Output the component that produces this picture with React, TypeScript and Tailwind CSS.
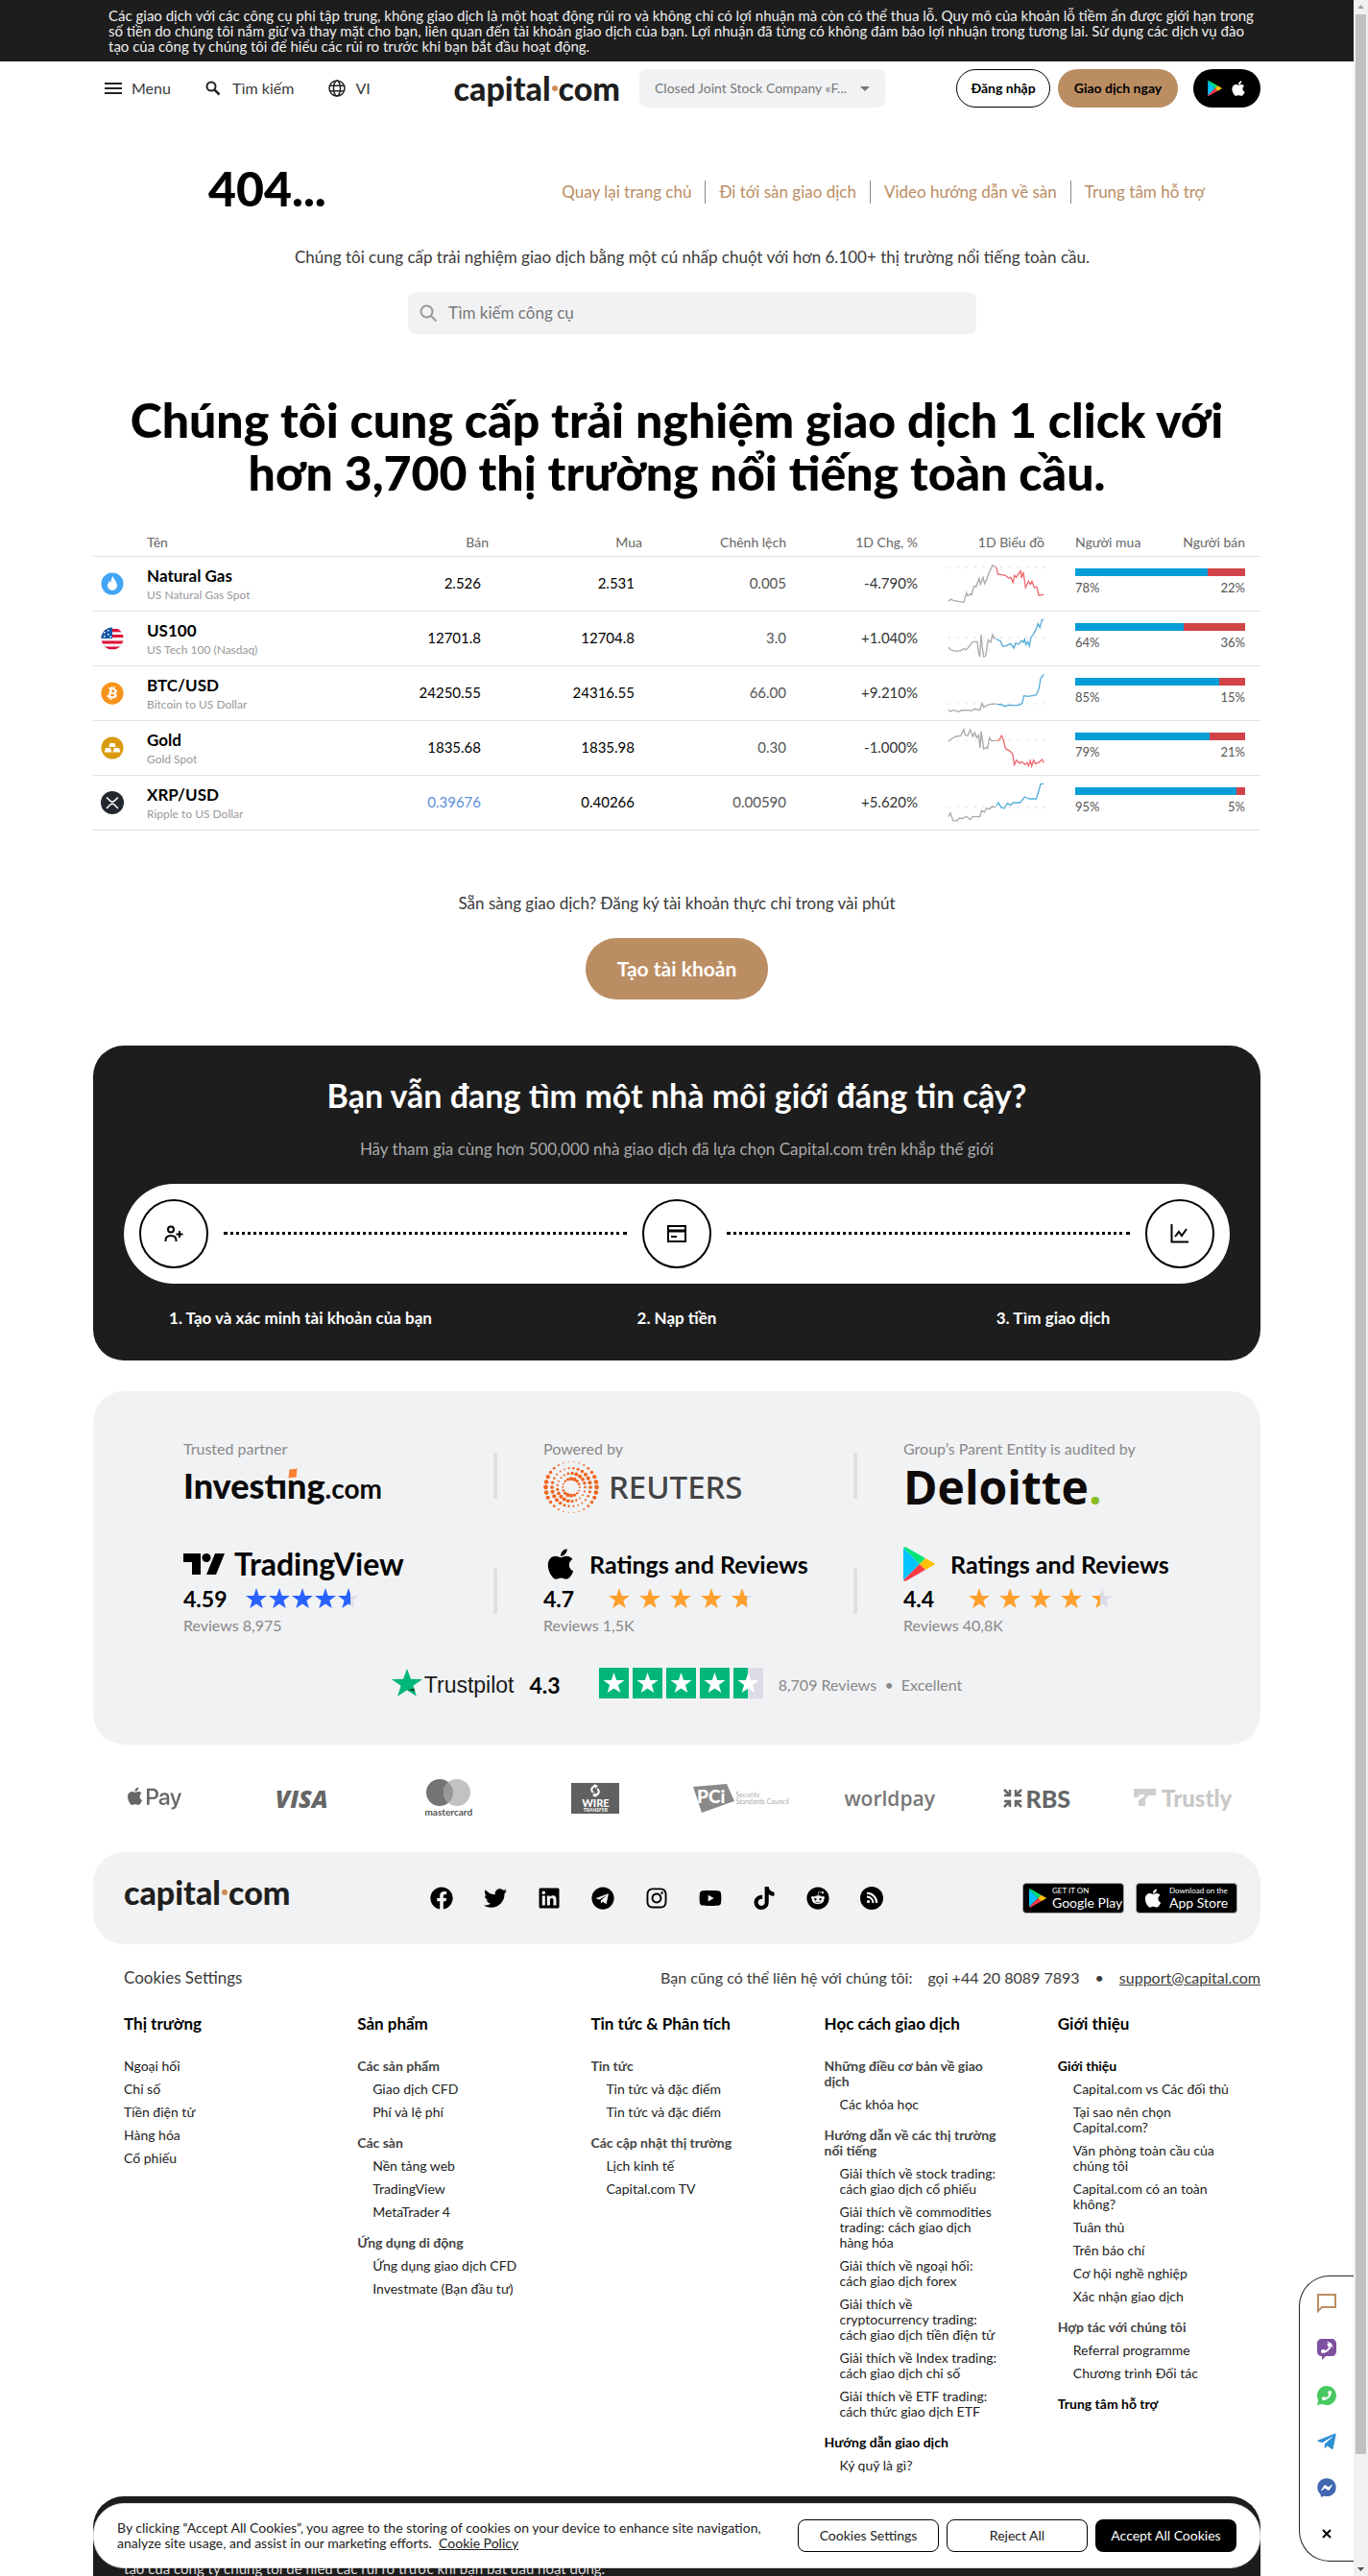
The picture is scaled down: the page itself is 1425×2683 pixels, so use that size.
import React from "react";
import {
  FaApple,
  FaApplePay,
  FaBitcoin,
  FaFacebook,
  FaFacebookMessenger,
  FaInstagram,
  FaLinkedin,
  FaPhoneAlt,
  FaReddit,
  FaTelegram,
  FaTelegramPlane,
  FaTiktok,
  FaTwitter,
  FaYoutube,
} from "react-icons/fa";

const RISK =
  "Các giao dịch với các công cụ phi tập trung, không giao dịch là một hoạt động rủi ro và không chỉ có lợi nhuận mà còn có thể thua lỗ. Quy mô của khoản lỗ tiềm ẩn được giới hạn trong số tiền do chúng tôi nắm giữ và thay mặt cho bạn, liên quan đến tài khoản giao dịch của bạn. Lợi nhuận đã từng có không đảm bảo lợi nhuận trong tương lai. Sử dụng các dịch vụ đào ";
const RISK_END = "tạo của công ty chúng tôi để hiểu các rủi ro trước khi bạn bắt đầu hoạt động.";

function Logo() {
  return (
    <span className="flex items-center text-[34px] leading-10 font-black text-[#1f1f1f]">
      capital
      <span className="mx-px h-1.5 w-1.5 rounded-full bg-[#cf8b54]" />
      com
    </span>
  );
}

function PlayIcon({ className }: { className: string }) {
  return (
    <svg viewBox="0 0 33 36" className={className} aria-hidden="true">
      <path d="M0 1v34l17-17z" fill="#00c3ff" />
      <path d="M0 1C1 0 2 0 3 .600L23 12l-6 6z" fill="#00e676" />
      <path d="M0 35c1 1 2 1 3 .400L23 24l-6-6z" fill="#ff3a44" />
      <path d="M23 12l9 5c1 .600 1 1.400 0 2l-9 5-6-6z" fill="#ffc107" />
    </svg>
  );
}

const STAR = "M11 0l2.700 7.900 8.300.100-6.600 5.100 2.400 8-6.800-4.700-6.800 4.700 2.400-8L0 8l8.300-.100z";

function Stars({ id, size, gap, color, part }: { id: string; size: string; gap: string; color: string; part: number }) {
  return (
    <span className={`flex ${gap}`}>
      {[1, 1, 1, 1, part].map((p, i) => (
        <svg key={i} viewBox="0 0 22 22" className={size} aria-hidden="true">
          <defs>
            <linearGradient id={`${id}${i}`}>
              <stop offset={p} stopColor={color} />
              <stop offset={p} stopColor="#dcdde8" />
            </linearGradient>
          </defs>
          <path d={STAR} fill={`url(#${id}${i})`} />
        </svg>
      ))}
    </span>
  );
}

function Reuters() {
  const dots: React.ReactNode[] = [];
  [
    [26.5, 30],
    [20, 26],
    [14.5, 21],
    [8.8, 16],
  ].forEach(([r, n], ring) => {
    for (let k = 0; k < n; k++) {
      const a = (k / n) * Math.PI * 2;
      const swing = Math.cos(2 * a + ring * 0.9);
      dots.push(
        <circle key={`${ring}-${k}`} cx={29 + r * Math.cos(a)} cy={30 + r * Math.sin(a)} r={1.5 + swing * (ring === 0 ? 0.9 : 0.6)} />
      );
    }
  });
  return (
    <svg viewBox="0 0 58 60" className="h-[60px] w-[58px]" fill="#f0651f" aria-hidden="true">
      {dots}
    </svg>
  );
}

function InstrumentIcon({ kind }: { kind: string }) {
  if (kind === "btc") return <FaBitcoin className="h-6 w-6 text-[#f7931a]" />;
  return (
    <svg viewBox="0 0 24 24" className="h-6 w-6" aria-hidden="true">
      {kind === "gas" && (
        <>
          <circle cx="12" cy="12" r="11.500" fill="#42a5f5" />
          <path d="M12.500 4c.500 3 4.500 5.500 4.500 10a5 5 0 0 1-10 0c0-2.500 1.500-4 2.500-5 .2 1 .5 1.500 1 1.800C10.600 8.500 11 6 12.500 4z" fill="#fff" />
        </>
      )}
      {kind === "us" && (
        <>
          <clipPath id="usc">
            <circle cx="12" cy="12" r="11.500" />
          </clipPath>
          <g clipPath="url(#usc)">
            <path d="M0 0h24v24H0z" fill="#f3f3f5" />
            <path d="M0 2h24v3.200H0zM0 8h24v3H0zM0 14.500h24v3H0zM0 20.500h24v3H0z" fill="#e0103a" />
            <path d="M0 0h12v12H0z" fill="#1458a8" />
            <path d="M3 5h1.500v1.500H3zM7 3h1.500v1.500H7zM7 7h1.500v1.500H7zM3 9h1.500v1.500H3zM9.500 9.500H11V11H9.500z" fill="#fff" />
          </g>
        </>
      )}
      {kind === "gold" && (
        <>
          <circle cx="12" cy="12" r="11.500" fill="#d99b0b" />
          <path d="M9.500 7h5l1.300 4H8.200zM5 12h5l1.500 4.500h-8zM14 12h5l1.500 4.500h-8z" fill="#fff" />
        </>
      )}
      {kind === "xrp" && (
        <>
          <circle cx="12" cy="12" r="12" fill="#23292f" />
          <path d="M6 6.500l3.500 3.400a3.600 3.600 0 0 0 5 0L18 6.500M6 18l3.500-3.500a3.600 3.600 0 0 1 5 0L18 18" fill="none" stroke="#fff" strokeWidth="1.500" />
        </>
      )}
    </svg>
  );
}

const rows = [
  {
    kind: "gas", name: "Natural Gas", sub: "US Natural Gas Spot", bid: "2.526", ask: "2.531", spread: "0.005", chg: "-4.790%", buy: 78, mid: 9, up: false,
    a: "12,115 20,108 26,112 42,115 60,118 68,88 72,98 80,92 84,95 92,68 98,70 108,44 112,62 120,40 125,60 132,45 140,22 150,2 160,8",
    b: "162,8 166,30 190,34 200,42 206,40 214,56 218,34 224,40 230,30 238,20 240,42 246,24 253,72 262,52 268,62 273,52 280,72 288,70 294,96 310,94",
  },
  {
    kind: "us", name: "US100", sub: "US Tech 100 (Nasdaq)", bid: "12701.8", ask: "12704.8", spread: "3.0", chg: "+1.040%", buy: 64, mid: 57, up: true,
    a: "12,88 20,96 34,100 50,98 60,92 68,95 76,86 84,74 92,70 102,70 106,104 110,117 114,48 118,90 122,117 128,114 136,64 144,72 150,48 156,60 160,58",
    b: "162,62 174,68 182,85 194,82 206,76 216,90 222,74 232,78 240,66 246,72 250,62 254,80 260,70 265,84 270,56 276,50 286,30 292,14 298,26 304,2 310,1",
  },
  {
    kind: "btc", name: "BTC/USD", sub: "Bitcoin to US Dollar", bid: "24250.55", ask: "24316.55", spread: "66.00", chg: "+9.210%", buy: 85, mid: 93, up: true,
    a: "12,112 18,117 28,113 44,118 52,114 72,113 84,115 94,109 110,113 116,92 122,104 132,98 142,95 160,93",
    b: "162,94 178,96 188,101 198,97 212,98 230,98 242,92 248,68 260,70 286,66 294,48 300,14 306,6 310,1",
  },
  {
    kind: "gold", name: "Gold", sub: "Gold Spot", bid: "1835.68", ask: "1835.98", spread: "0.30", chg: "-1.000%", buy: 79, mid: 37, up: false,
    a: "12,40 20,33 36,24 50,22 60,2 64,20 72,22 80,3 88,24 94,12 100,28 106,20 111,60 114,8 122,64 130,58 134,62 140,28 146,38 160,37",
    b: "162,37 170,36 178,22 184,36 190,62 204,70 212,78 218,113 224,98 234,108 240,103 252,112 258,106 262,116 268,100 272,117 278,98 284,110 296,104 304,96 310,106",
  },
  {
    kind: "xrp", name: "XRP/USD", sub: "Ripple to US Dollar", bid: "0.39676", ask: "0.40266", spread: "0.00590", chg: "+5.620%", buy: 95, mid: 75, up: true,
    a: "12,104 18,92 26,116 38,117 46,108 56,110 68,103 80,113 88,104 110,104 116,84 124,90 130,78 140,80 148,72 160,74",
    b: "162,70 168,60 176,74 186,78 196,62 206,68 214,60 236,60 250,42 264,48 286,48 292,30 300,2 310,1",
  },
];

function Instruments() {
  return (
    <table className="mt-8 w-full table-fixed border-collapse text-[15px] text-black">
      <colgroup>
        <col className="w-14" />
        <col />
        <col className="w-[120px]" />
        <col className="w-40" />
        <col className="w-[150px]" />
        <col className="w-[137px]" />
        <col className="w-[132px]" />
        <col className="w-[225px]" />
      </colgroup>
      <thead>
        <tr className="h-[27px] border-b border-[#e0e0e0] text-right text-sm text-[#666]">
          <th />
          <th className="text-left font-normal">Tên</th>
          <th className="font-normal">Bán</th>
          <th className="font-normal">Mua</th>
          <th className="font-normal">Chênh lệch</th>
          <th className="font-normal">1D Chg, %</th>
          <th className="font-normal">1D Biểu đồ</th>
          <th className="pr-4 pl-8 font-normal">
            <span className="flex justify-between">
              <span>Người mua</span>
              <span>Người bán</span>
            </span>
          </th>
        </tr>
      </thead>
      <tbody>
        {rows.map((r) => (
          <tr key={r.name} className="h-[57px] border-b border-[#e0e0e0] text-right">
            <td className="pl-2">
              <InstrumentIcon kind={r.kind} />
            </td>
            <td className="pt-1 text-left">
              <a href="#" className="block text-[17px] leading-5 font-bold">{r.name}</a>
              <span className="block text-xs leading-5 text-[#999]">{r.sub}</span>
            </td>
            <td className={r.kind === "xrp" ? "pr-2 text-[#5a8fd8]" : "pr-2"}>{r.bid}</td>
            <td className="pr-2">{r.ask}</td>
            <td className="text-[#555]">{r.spread}</td>
            <td className="text-[#333]">{r.chg}</td>
            <td>
              <svg viewBox="12 0 300 120" className="ml-auto h-10 w-[100px] overflow-visible" fill="none" strokeWidth="4" aria-hidden="true">
                <path d={`M13 ${r.mid}H316`} stroke="#ccc" strokeDasharray="3 24" />
                <polyline points={r.a} stroke="#aaa" />
                <polyline points={r.b} stroke={r.up ? "#55add9" : "#f0696f"} />
              </svg>
            </td>
            <td className="pt-3 pr-4 pl-8 align-top">
              <div className="flex h-2 bg-[#d04347]">
                <div className="bg-[#049dd6]" style={{ width: `${r.buy}%` }} />
              </div>
              <div className="mt-1 flex justify-between text-[13px] leading-4 text-[#555]">
                <span>{r.buy}%</span>
                <span>{100 - r.buy}%</span>
              </div>
            </td>
          </tr>
        ))}
      </tbody>
    </table>
  );
}

function StepCircle({ children }: { children: React.ReactNode }) {
  return (
    <span className="flex h-[72px] w-[72px] shrink-0 items-center justify-center rounded-full border-2 border-black text-black">
      <svg viewBox="0 0 24 24" className="h-6 w-6" fill="none" stroke="currentColor" strokeWidth="2" aria-hidden="true">
        {children}
      </svg>
    </span>
  );
}

function Steps() {
  return (
    <section className="mt-12 rounded-[32px] bg-[#1d1d1d] px-8 py-8 text-center text-white">
      <h2 className="text-[34px] leading-10 font-bold">Bạn vẫn đang tìm một nhà môi giới đáng tin cậy?</h2>
      <p className="mt-6 text-[17px] leading-6 text-[#aaa]">Hãy tham gia cùng hơn 500,000 nhà giao dịch đã lựa chọn Capital.com trên khắp thế giới</p>
      <div className="mt-6 flex items-center gap-4 rounded-full bg-white p-4">
        <StepCircle>
          <circle cx="9" cy="7.500" r="3" />
          <path d="M3.500 20v-1c0-3 2.200-5 5.500-5s5.500 2 5.500 5v1M18 9v7M14.500 12.500h7" />
        </StepCircle>
        <span className="flex-1 border-t-[3px] border-dotted border-black" />
        <StepCircle>
          <path d="M3 4h18v16H3zM3 9.500h18" />
          <path d="M6 15h6" />
          <path d="M3 8.500h18" />
        </StepCircle>
        <span className="flex-1 border-t-[3px] border-dotted border-black" />
        <StepCircle>
          <path d="M3.500 2v18.500H21M7 15l4-5 3 4 5-7" />
        </StepCircle>
      </div>
      <ul className="-mx-3 mt-6 grid grid-cols-3 text-[17px] leading-6 font-bold">
        <li>1. Tạo và xác minh tài khoản của bạn</li>
        <li>2. Nạp tiền</li>
        <li>3. Tìm giao dịch</li>
      </ul>
    </section>
  );
}

function PartnerCell({ divider, children }: { divider: boolean; children: React.ReactNode }) {
  return (
    <div className="flex items-center justify-between">
      <div>{children}</div>
      {divider && <span className="mr-12 h-12 w-1 rounded-full bg-[#dedfe1]" />}
    </div>
  );
}

function Partners() {
  return (
    <section className="mt-8 rounded-[32px] bg-[#f1f2f4] py-12 text-base leading-6 text-[#888]">
      <div className="grid grid-cols-[375px_375px_auto] gap-y-8 pl-[94px]">
        <PartnerCell divider>
          Trusted partner
          <div className="flex h-14 items-baseline pt-2 text-[#0b0b0b]">
            <span className="text-[36px] leading-9 font-black">
              Invest
              <span className="relative">
                ı
                <span className="absolute top-[5px] left-0.5 h-[9px] w-2 -skew-x-6 -skew-y-6 bg-[#ff8135]" />
              </span>
              ng
            </span>
            <span className="text-[28px] leading-9 font-bold">.com</span>
          </div>
        </PartnerCell>
        <PartnerCell divider>
          Powered by
          <div className="flex h-14 items-center gap-2.5">
            <Reuters />
            <span className="font-[Noto_Sans] text-[33px] leading-9 font-medium text-[#444]">REUTERS</span>
          </div>
        </PartnerCell>
        <PartnerCell divider={false}>
          Group’s Parent Entity is audited by
          <div className="flex h-14 items-center font-[Open_Sans] text-[48px] leading-[56px] font-bold text-[#0f0b0b]">
            Deloitte<span className="text-[#86bc25]">.</span>
          </div>
        </PartnerCell>
        <PartnerCell divider>
          <div className="flex h-10 items-center gap-2.5 text-black">
            <svg viewBox="0 0 43 22" className="h-[22px] w-[43px]" aria-hidden="true">
              <path d="M0 0h18v22H9V9H0z" />
              <circle cx="24" cy="4.500" r="4.500" />
              <path d="M33 0h10l-9 22H24z" />
            </svg>
            <span className="text-[32px] leading-10 font-bold">TradingView</span>
          </div>
          <div className="flex h-8 items-center gap-5">
            <strong className="text-[23px] text-black">4.59</strong>
            <Stars id="tv" size="h-[22px] w-[22px]" gap="gap-0.5" color="#2962ff" part={0.59} />
          </div>
          Reviews 8,975
        </PartnerCell>
        <PartnerCell divider>
          <div className="flex h-10 items-center gap-3 text-black">
            <FaApple className="h-9 w-9" />
            <span className="text-[25px] leading-10 font-bold">Ratings and Reviews</span>
          </div>
          <div className="flex h-8 items-center gap-9">
            <strong className="text-[23px] text-black">4.7</strong>
            <Stars id="ap" size="h-[22px] w-[22px]" gap="gap-2.5" color="#ff9f2e" part={0.75} />
          </div>
          Reviews 1,5K
        </PartnerCell>
        <PartnerCell divider={false}>
          <div className="flex h-10 items-center gap-4 text-black">
            <PlayIcon className="h-9 w-[33px]" />
            <span className="text-[25px] leading-10 font-bold">Ratings and Reviews</span>
          </div>
          <div className="flex h-8 items-center gap-9">
            <strong className="text-[23px] text-black">4.4</strong>
            <Stars id="gp" size="h-[22px] w-[22px]" gap="gap-2.5" color="#ff9f2e" part={0.4} />
          </div>
          Reviews 40,8K
        </PartnerCell>
      </div>
      <div className="mt-8 flex h-8 items-center justify-center">
        <svg viewBox="0 0 22 22" className="h-[30px] w-8" preserveAspectRatio="none" aria-hidden="true">
          <path d={STAR} fill="#00b67a" />
          <path d="M16 15l.700 2.200L11 16.400z" fill="#005128" />
        </svg>
        <span className="ml-0.5 pt-1 font-[Liberation_Sans] text-[23px] text-[#191919]">Trustpilot</span>
        <strong className="ml-4 pt-1 text-[23px] text-black">4.3</strong>
        <span className="mr-4 ml-10 flex gap-1">
          {[0, 1, 2, 3, 4].map((i) => (
            <svg key={i} viewBox="0 0 31 32" className="h-8 w-[31px]" aria-hidden="true">
              <path d="M0 0h31v32H0z" fill={i === 4 ? "#dcdce6" : "#00b67a"} />
              {i === 4 && <path d="M0 0h15v32H0z" fill="#00b67a" />}
              <path d={STAR} fill="#fff" transform="translate(4.500 5)" />
            </svg>
          ))}
        </span>
        <span className="pt-1">8,709 Reviews&nbsp; •&nbsp; Excellent</span>
      </div>
    </section>
  );
}

function Payments() {
  return (
    <section className="flex h-28 items-center justify-between pr-7 pl-3" aria-label="Payment methods">
      <div className="flex w-[104px] justify-center">
        <FaApplePay className="h-14 w-14 text-[#666]" />
      </div>
      <div className="w-[104px] text-center font-[Open_Sans] text-[25px] leading-8 font-extrabold text-[#666] italic">VISA</div>
      <div className="flex w-[104px] flex-col items-center">
        <svg viewBox="0 0 46 28" className="h-7 w-[46px]" aria-hidden="true">
          <circle cx="14" cy="14" r="14" fill="#747474" />
          <circle cx="32" cy="14" r="14" fill="#c2c2c2" />
          <path d="M23 3.300a14 14 0 0 1 0 21.400 14 14 0 0 1 0-21.400z" fill="#979797" />
        </svg>
        <span className="text-[10px] leading-3 font-bold text-[#555]">mastercard</span>
      </div>
      <div className="flex w-[104px] justify-center">
        <div className="flex h-8 w-[50px] flex-col items-center bg-[#606060] text-white">
          <svg viewBox="0 0 14 16" className="h-4 w-3.5" fill="none" stroke="#fff" strokeWidth="2" aria-hidden="true">
            <path d="M7 3C3 4 2 8 5 10M7 13c4-1 5-5 2-7" />
            <path d="M6 1l4 2-3 3zM8 15l-4-2 3-3z" fill="#fff" stroke="none" />
          </svg>
          <span className="text-[11px] leading-[10px] font-black">WIRE</span>
          <span className="text-[5px] leading-[5px] font-bold">TRANSFER</span>
        </div>
      </div>
      <div className="flex w-[104px] items-center gap-0.5">
        <svg viewBox="0 0 43 30" className="h-[30px] w-[43px] shrink-0" aria-hidden="true">
          <path d="M0 3L35 0l8 18L9 30z" fill="#8a8a8a" />
          <text x="4" y="20" fontSize="19" fontWeight="900" fill="#fff" fontFamily="Lato">PCi</text>
        </svg>
        <span className="text-[7px] leading-[7px] whitespace-nowrap text-[#aaa]">Security<br />Standards Council</span>
      </div>
      <div className="w-[104px] text-center font-[Open_Sans] text-[21px] leading-8 font-semibold text-[#777]">worldpay</div>
      <div className="flex w-[104px] items-center justify-center gap-1 text-[25px] leading-8 font-black text-[#666]">
        <svg viewBox="0 0 20 20" className="h-5 w-5" fill="none" stroke="#666" strokeWidth="2.500" aria-hidden="true">
          <path d="M1 7h6V1M13 1v6h6M1 13h6v6M13 19v-6h6M1 1l6 6M19 1l-6 6M1 19l6-6M19 19l-6-6" />
        </svg>
        RBS
      </div>
      <div className="flex w-[104px] items-center gap-1.5 text-2xl leading-8 font-black text-[#c8c8c8]">
        <svg viewBox="0 0 23 20" className="h-5 w-[23px] shrink-0" aria-hidden="true">
          <path d="M0 0h23v7h-8l-3 4v7H5v-6l6-4V6H7l-3 3H0z" fill="#cfcfcf" />
        </svg>
        Trustly
      </div>
    </section>
  );
}

function StoreBadge({ icon, top, name }: { icon: React.ReactNode; top: string; name: string }) {
  return (
    <a href="#" className="flex h-8 w-[106px] items-center gap-1.5 rounded border border-[#a6a6a6] bg-black px-1.5 text-white">
      {icon}
      <span className="flex flex-col whitespace-nowrap">
        <span className="text-[8px] leading-[10px]">{top}</span>
        <span className="text-sm leading-4">{name}</span>
      </span>
    </a>
  );
}

function Rss() {
  return (
    <svg viewBox="0 0 24 24" className="h-6 w-6" aria-hidden="true">
      <circle cx="12" cy="12" r="12" />
      <circle cx="8.500" cy="15.500" r="1.600" fill="#fff" />
      <path d="M7 10.500a6.500 6.500 0 0 1 6.500 6.500M7 6.800A10.200 10.200 0 0 1 17.200 17" fill="none" stroke="#fff" strokeWidth="2" />
    </svg>
  );
}

const socials: [string, React.ReactNode][] = [
  ["Facebook", <FaFacebook className="h-6 w-6" />],
  ["Twitter", <FaTwitter className="h-6 w-6" />],
  ["LinkedIn", <FaLinkedin className="h-6 w-6" />],
  ["Telegram", <FaTelegram className="h-6 w-6" />],
  ["Instagram", <FaInstagram className="h-6 w-6" />],
  ["YouTube", <FaYoutube className="h-6 w-6" />],
  ["TikTok", <FaTiktok className="h-6 w-6" />],
  ["Reddit", <FaReddit className="h-6 w-6" />],
  ["RSS", <Rss />],
];

type Group = { head?: string; dark?: boolean; items: string[] };
const columns: { title: string; groups: Group[] }[] = [
  { title: "Thị trường", groups: [{ items: ["Ngoại hối", "Chỉ số", "Tiền điện tử", "Hàng hóa", "Cổ phiếu"] }] },
  {
    title: "Sản phẩm",
    groups: [
      { head: "Các sản phẩm", items: ["Giao dịch CFD", "Phí và lệ phí"] },
      { head: "Các sàn", items: ["Nền tảng web", "TradingView", "MetaTrader 4"] },
      { head: "Ứng dụng di động", items: ["Ứng dụng giao dịch CFD", "Investmate (Bạn đầu tư)"] },
    ],
  },
  {
    title: "Tin tức & Phân tích",
    groups: [
      { head: "Tin tức", items: ["Tin tức và đặc điểm", "Tin tức và đặc điểm"] },
      { head: "Các cập nhật thị trường", items: ["Lịch kinh tế", "Capital.com TV"] },
    ],
  },
  {
    title: "Học cách giao dịch",
    groups: [
      { head: "Những điều cơ bản về giao dịch", items: ["Các khóa học"] },
      {
        head: "Hướng dẫn về các thị trường nổi tiếng",
        items: [
          "Giải thích về stock trading: cách giao dịch cổ phiếu",
          "Giải thích về commodities trading: cách giao dịch hàng hóa",
          "Giải thích về ngoại hối: cách giao dịch forex",
          "Giải thích về cryptocurrency trading: cách giao dịch tiền điện tử",
          "Giải thích về Index trading: cách giao dịch chỉ số",
          "Giải thích về ETF trading: cách thức giao dịch ETF",
        ],
      },
      { head: "Hướng dẫn giao dịch", dark: true, items: ["Ký quỹ là gì?"] },
    ],
  },
  {
    title: "Giới thiệu",
    groups: [
      {
        head: "Giới thiệu",
        dark: true,
        items: [
          "Capital.com vs Các đối thủ",
          "Tại sao nên chọn Capital.com?",
          "Văn phòng toàn cầu của chúng tôi",
          "Capital.com có an toàn không?",
          "Tuân thủ",
          "Trên báo chí",
          "Cơ hội nghề nghiệp",
          "Xác nhận giao dịch",
        ],
      },
      { head: "Hợp tác với chúng tôi", items: ["Referral programme", "Chương trình Đối tác"] },
      { head: "Trung tâm hỗ trợ", dark: true, items: [] },
    ],
  },
];

function FooterLinks() {
  return (
    <nav className="mt-6 grid grid-cols-5" aria-label="Footer">
      {columns.map((c) => (
        <div key={c.title} className="pr-7 pl-8">
          <h3 className="text-[17px] leading-6 font-bold text-black">{c.title}</h3>
          <div className="mt-6 flex flex-col gap-4 text-sm leading-4">
            {c.groups.map((g, i) => (
              <ul key={i} className="flex flex-col gap-2">
                {g.head && (
                  <li className={g.dark ? "font-bold text-black" : "font-bold text-[#444]"}>
                    <a href="#">{g.head}</a>
                  </li>
                )}
                {g.items.map((t, k) => (
                  <li key={k} className={g.head ? "pl-4 text-[#222]" : "text-[#222]"}>
                    <a href="#">{t}</a>
                  </li>
                ))}
              </ul>
            ))}
          </div>
        </div>
      ))}
    </nav>
  );
}

function ContactWidget() {
  return (
    <aside className="fixed right-[15px] bottom-[15px] w-[57px] rounded-l-[32px] border border-r-0 border-[#222] bg-white py-1" aria-label="Contact">
      <button className="flex h-12 w-full items-center justify-center" aria-label="Chat">
        <svg viewBox="0 0 20 20" className="h-5 w-5" fill="none" stroke="#bb8d62" strokeWidth="2" aria-hidden="true">
          <path d="M1 18V1h18v13H5z" />
        </svg>
      </button>
      <button className="flex h-12 w-full items-center justify-center" aria-label="Viber">
        <svg viewBox="0 0 20 22" className="h-[22px] w-5" aria-hidden="true">
          <path d="M5 0h10c3 0 5 2 5 5v8c0 3-2 5-5 5H9l-4 4v-4c-3 0-5-2-5-5V5c0-3 2-5 5-5z" fill="#7d51a0" />
          <g transform="translate(15 4) scale(-1 1)">
            <FaPhoneAlt size={11} color="#fff" />
          </g>
          <path d="M10.500 3.500a5.500 5.500 0 0 1 5.500 5.500M10.500 6a3 3 0 0 1 3 3" fill="none" stroke="#fff" />
        </svg>
      </button>
      <button className="flex h-12 w-full items-center justify-center" aria-label="WhatsApp">
        <svg viewBox="0 0 20 20" className="h-5 w-5" aria-hidden="true">
          <path d="M10 0a10 10 0 1 1-4.800 18.800L0 20l1.300-5A10 10 0 0 1 10 0z" fill="#48c95f" />
          <g transform="translate(15 5) scale(-1 1)">
            <FaPhoneAlt size={10} color="#fff" />
          </g>
        </svg>
      </button>
      <button className="flex h-12 w-full items-center justify-center text-[#2f8fd3]" aria-label="Telegram">
        <FaTelegramPlane className="h-[22px] w-[22px]" />
      </button>
      <button className="flex h-12 w-full items-center justify-center text-[#4267b2]" aria-label="Messenger">
        <FaFacebookMessenger className="h-5 w-5" />
      </button>
      <button className="flex h-12 w-full items-center justify-center" aria-label="Close">
        <svg viewBox="0 0 10 10" className="h-2.5 w-2.5" stroke="#000" strokeWidth="2" aria-hidden="true">
          <path d="M1 1l8 8M9 1L1 9" />
        </svg>
      </button>
    </aside>
  );
}

function Scrollbar() {
  return (
    <div className="fixed inset-y-0 right-0 flex w-[15px] flex-col items-center bg-[#f1f1f1]" aria-hidden="true">
      <svg viewBox="0 0 15 15" className="h-[15px] w-full" fill="#a3a3a3">
        <path d="M4 9l3.500-4L11 9z" />
      </svg>
      <div className="mb-28 w-[11px] flex-1 bg-[#c1c1c1]" />
      <svg viewBox="0 0 15 15" className="h-[15px] w-full" fill="#505050">
        <path d="M4 6l3.500 4L11 6z" />
      </svg>
    </div>
  );
}

export default function App() {
  return (
    <div className="bg-white pr-[15px] font-[Lato,sans-serif] text-[17px] text-[#3a3a3a]">
      <div className="bg-[#1d1d1d] text-[15px] leading-4 text-[#eee]">
        <p className="mx-auto max-w-[1216px] py-2 pl-4">{RISK}{RISK_END}</p>
      </div>
      <div className="mx-auto max-w-[1216px]">
        <header className="flex h-14 items-center text-base">
          <button className="ml-3 flex items-center gap-2.5">
            <svg viewBox="0 0 18 12" className="h-3 w-[18px]" fill="#222" aria-hidden="true">
              <path d="M0 0h18v2H0zM0 5h18v2H0zM0 10h18v2H0z" />
            </svg>
            Menu
          </button>
          <button className="ml-9 flex items-center gap-3">
            <svg viewBox="0 0 16 16" className="h-4 w-4" fill="none" stroke="#222" strokeWidth="2" aria-hidden="true">
              <circle cx="6" cy="6" r="4.500" />
              <path d="M9.500 9.500l5 5" strokeWidth="2.500" />
            </svg>
            Tìm kiếm
          </button>
          <button className="ml-9 flex items-center gap-2.5">
            <svg viewBox="0 0 18 18" className="h-[18px] w-[18px]" fill="none" stroke="#222" strokeWidth="1.500" aria-hidden="true">
              <circle cx="9" cy="9" r="8" />
              <ellipse cx="9" cy="9" rx="3.500" ry="8" />
              <path d="M1.500 6.200h15M1.500 11.800h15" />
            </svg>
            VI
          </button>
          <a href="#" className="ml-auto" aria-label="capital.com">
            <Logo />
          </a>
          <div className="relative ml-5">
            <select aria-label="Company" className="h-10 w-64 appearance-none rounded-lg bg-[#f1f2f4] px-4 text-sm text-[#777]">
              <option>Closed Joint Stock Company «F...</option>
            </select>
            <svg viewBox="0 0 10 5" className="pointer-events-none absolute top-[18px] right-4 h-[5px] w-2.5" fill="#777" aria-hidden="true">
              <path d="M0 0h10L5 5z" />
            </svg>
          </div>
          <button className="ml-[74px] h-10 w-[98px] rounded-full border border-black text-sm font-bold text-black">Đăng nhập</button>
          <button className="ml-2 h-10 w-[125px] rounded-full bg-[#bb8d62] text-sm font-bold text-black">Giao dịch ngay</button>
          <a href="#" aria-label="Apps" className="ml-4 flex h-10 w-[70px] items-center justify-center gap-2 rounded-full bg-black text-white">
            <PlayIcon className="h-4 w-[15px]" />
            <FaApple className="h-[18px] w-[18px]" />
          </a>
        </header>

        <main>
          <div className="mt-12 flex items-center justify-between pr-11 pl-[120px]">
            <h1 className="text-[50px] leading-[56px] font-black text-black">404...</h1>
            <ul className="mt-2 flex divide-x divide-[#888] leading-6 text-[#bb8d62]">
              {["Quay lại trang chủ", "Đi tới sàn giao dịch", "Video hướng dẫn về sàn", "Trung tâm hỗ trợ"].map((t) => (
                <li key={t} className="px-3.5">
                  <a href="#">{t}</a>
                </li>
              ))}
            </ul>
          </div>
          <div className="mt-8 pl-8 text-center">
            <p className="leading-6">Chúng tôi cung cấp trải nghiệm giao dịch bằng một cú nhấp chuột với hơn 6.100+ thị trường nổi tiếng toàn cầu.</p>
            <label className="mx-auto mt-6 flex h-11 w-full max-w-[592px] items-center gap-3 rounded-lg bg-[#f1f2f4] px-3">
              <svg viewBox="0 0 18 18" className="h-[18px] w-[18px]" fill="none" stroke="#999" strokeWidth="2" aria-hidden="true">
                <circle cx="7.500" cy="7.500" r="6" />
                <path d="M12 12l5.500 5.500" />
              </svg>
              <input aria-label="Tìm kiếm công cụ" placeholder="Tìm kiếm công cụ" className="flex-1 bg-transparent outline-none placeholder:text-[#777]" />
            </label>
          </div>
          <h2 className="mt-[62px] text-center text-[50px] leading-[55px] font-black text-black">
            Chúng tôi cung cấp trải nghiệm giao dịch 1 click với hơn 3,700 thị trường nổi tiếng toàn cầu.
          </h2>
          <Instruments />
          <div className="mt-16 text-center">
            <p className="leading-6">Sẵn sàng giao dịch? Đăng ký tài khoản thực chỉ trong vài phút</p>
            <button className="mt-6 h-16 w-[190px] rounded-full bg-[#bb8d62] text-[21px] font-bold text-white">Tạo tài khoản</button>
          </div>
          <Steps />
          <Partners />
          <Payments />
        </main>

        <footer>
          <div className="flex h-24 items-center justify-between rounded-[32px] bg-[#f1f2f4] pr-6 pl-8 text-black">
            <div className="mb-3">
              <Logo />
            </div>
            <ul className="flex gap-8">
              {socials.map(([name, icon]) => (
                <li key={name}>
                  <a href="#" aria-label={name}>{icon}</a>
                </li>
              ))}
            </ul>
            <div className="flex gap-3">
              <StoreBadge icon={<PlayIcon className="h-5 w-[18px] shrink-0" />} top="GET IT ON" name="Google Play" />
              <StoreBadge icon={<FaApple className="h-[22px] w-[22px] shrink-0" />} top="Download on the" name="App Store" />
            </div>
          </div>
          <div className="mt-[23px] flex justify-between pl-8 leading-6">
            <button>Cookies Settings</button>
            <p className="flex gap-4 text-base leading-6">
              <span>Bạn cũng có thể liên hệ với chúng tôi:</span>
              <a href="#">gọi +44 20 8089 7893</a>
              <span>•</span>
              <a href="#" className="underline">support@capital.com</a>
            </p>
          </div>
          <FooterLinks />
          <div className="mt-6 rounded-t-[32px] bg-[#1d1d1d] px-8 pt-[67px]">
            <p className="text-[15px] leading-4 text-[#ddd]">{RISK_END}</p>
          </div>
        </footer>
      </div>

      <div className="pointer-events-none fixed inset-x-0 bottom-2 pr-[15px]">
        <section aria-label="Cookies" className="pointer-events-auto mx-auto flex max-w-[1216px] items-center gap-2 rounded-[32px] border border-[#ddd] bg-white px-6 py-4 text-sm leading-4 text-[#222]">
          <p className="mr-auto max-w-[690px]">
            By clicking “Accept All Cookies”, you agree to the storing of cookies on your device to enhance site navigation, analyze site usage, and assist in our marketing efforts.&nbsp;{" "}
            <a href="#" className="underline">Cookie Policy</a>
          </p>
          <button className="h-[34px] w-[147px] shrink-0 rounded-lg border border-black">Cookies Settings</button>
          <button className="h-[34px] w-[147px] shrink-0 rounded-lg border border-black">Reject All</button>
          <button className="h-[34px] w-[147px] shrink-0 rounded-lg bg-black text-white">Accept All Cookies</button>
        </section>
      </div>
      <ContactWidget />
      <Scrollbar />
    </div>
  );
}
